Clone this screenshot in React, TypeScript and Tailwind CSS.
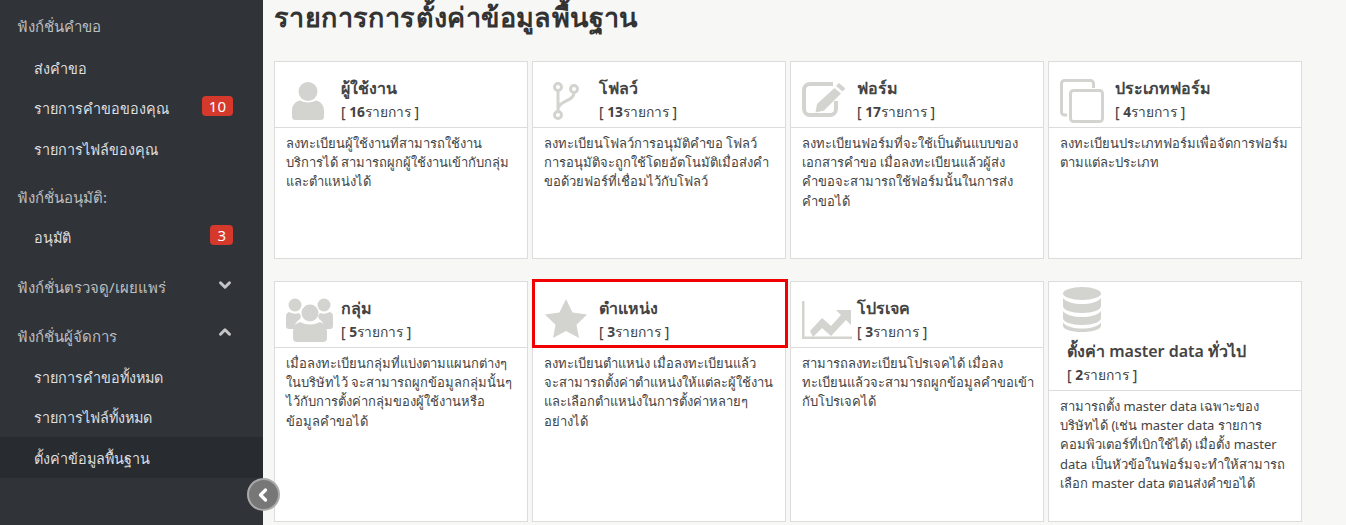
import { ReactNode } from 'react';
import { ChevronDown, ChevronLeft, ChevronUp } from 'lucide-react';

const UserIcon = () => (
  <svg viewBox="0 0 32 38" className="w-[32px] h-[38px] ml-[17px] mt-[20px] fill-[#d3d4d0]">
    <circle cx="16" cy="9.5" r="9.5" />
    <path d="M8 18.5q8 4 16 0c5 1 8 5 8 10v6a3.500 3.500 0 0 1-3.500 3.500h-25a3.500 3.500 0 0 1-3.500-3.500v-6c0-5 3-9 8-10z" />
  </svg>
);

const BranchIcon = () => (
  <svg viewBox="0 0 26 38" className="w-[26px] h-[38px] ml-[20px] mt-[20px] fill-none stroke-[#d3d4d0] stroke-[3px]">
    <circle cx="5" cy="5" r="3.500" />
    <circle cx="5" cy="33" r="3.500" />
    <circle cx="21" cy="7" r="3.500" />
    <path d="M5 9v20M21 11c0 9-16 7-16 17" />
  </svg>
);

const EditIcon = () => (
  <svg viewBox="0 0 44 35" className="w-[44px] h-[35px] ml-[11px] mt-[20px]">
    <path d="M31 2H8a6 6 0 0 0-6 6v19a6 6 0 0 0 6 6h20a6 6 0 0 0 6-6v-8" fill="none" stroke="#d3d4d0" strokeWidth="4" />
    <path d="M37 1l6.500 5.500-3 3-6.500-5.500zM32.500 6l6.500 5.500-17 17-8.500 2 1.500-8.500z" fill="#d3d4d0" />
  </svg>
);

const CopyIcon = () => (
  <svg viewBox="0 0 44 44" className="w-[44px] h-[44px] ml-[11px] mt-[17px] fill-none stroke-[#d3d4d0] stroke-[3px]">
    <path d="M7 36H4.500a3 3 0 0 1-3-3V4.500a3 3 0 0 1 3-3h26a3 3 0 0 1 3 3V9" />
    <rect x="10.500" y="11.500" width="32" height="31" rx="3" />
  </svg>
);

const GroupIcon = () => (
  <svg viewBox="0 0 47 44" className="w-[47px] h-[44px] ml-[11px] mt-[16px] fill-[#d3d4d0]">
    <circle cx="9" cy="7" r="6.500" />
    <circle cx="38" cy="7" r="6.500" />
    <path d="M3 14q6 3 10 1 3 3 1 6-5 3-6 10H3a3 3 0 0 1-3-3V18q0-3 3-4zM44 14q-6 3-10 1-3 3-1 6 5 3 6 10h5a3 3 0 0 0 3-3V18q0-3-3-4z" />
    <circle cx="24" cy="15" r="8.500" />
    <path d="M14 24q10 5 20 0 7 2 7 10v6a4 4 0 0 1-4 4H11a4 4 0 0 1-4-4v-6q0-8 7-10z" />
  </svg>
);

const StarIcon = () => (
  <svg viewBox="0 0 42 39" className="w-[42px] h-[39px] ml-[12px] mt-[17px] fill-[#d3d4d0]">
    <path d="M21 0l6.500 13.500 14.500 2-10.500 10.300L34 39 21 32l-13 7 2.500-13.200L0 15.500l14.500-2z" />
  </svg>
);

const ChartIcon = () => (
  <svg viewBox="0 0 50 38" className="w-[50px] h-[38px] ml-[11px] mt-[19px] fill-[#d3d4d0]">
    <path d="M0 0h2.500v35.500H50V38H0z" />
    <path d="M8 30l12-13 9 8 10-11-5-5h15v15l-5-5-15 16-9-8-9 9z" />
  </svg>
);

const DatabaseIcon = () => (
  <svg viewBox="0 0 38 45" className="w-[38px] h-[45px] fill-[#d3d4d0]">
    <ellipse cx="19" cy="6.500" rx="19" ry="6.500" />
    <path d="M0 11c3 4 11 6 19 6s16-2 19-6v8c0 4-8 7-19 7S0 23 0 19zM0 24c3 4 11 6 19 6s16-2 19-6v7c0 4-8 7-19 7S0 35 0 31zM0 35.500c3 4 11 6 19 6s16-2 19-6v3c0 4-8 6.500-19 6.500S0 42.500 0 38.500z" />
  </svg>
);

type Card = {
  title: string;
  count: string;
  icon: ReactNode;
  text: string;
  marked?: boolean;
};

const topCards: Card[] = [
  {
    title: 'ผู้ใช้งาน',
    count: '16',
    icon: <UserIcon />,
    text: 'ลงทะเบียนผู้ใช้งานที่สามารถใช้งาน\nบริการได้ สามารถผูกผู้ใช้งานเข้ากับกลุ่ม\nและตำแหน่งได้',
  },
  {
    title: 'โฟลว์',
    count: '13',
    icon: <BranchIcon />,
    text: 'ลงทะเบียนโฟลว์การอนุมัติคำขอ โฟลว์\nการอนุมัติจะถูกใช้โดยอัตโนมัติเมื่อส่งคำ\nขอด้วยฟอร์ที่เชื่อมไว้กับโฟลว์',
  },
  {
    title: 'ฟอร์ม',
    count: '17',
    icon: <EditIcon />,
    text: 'ลงทะเบียนฟอร์มที่จะใช้เป็นต้นแบบของ\nเอกสารคำขอ เมื่อลงทะเบียนแล้วผู้ส่ง\nคำขอจะสามารถใช้ฟอร์มนั้นในการส่ง\nคำขอได้',
  },
  {
    title: 'ประเภทฟอร์ม',
    count: '4',
    icon: <CopyIcon />,
    text: 'ลงทะเบียนประเภทฟอร์มเพื่อจัดการฟอร์ม\nตามแต่ละประเภท',
  },
];

const bottomCards: Card[] = [
  {
    title: 'กลุ่ม',
    count: '5',
    icon: <GroupIcon />,
    text: 'เมื่อลงทะเบียนกลุ่มที่แบ่งตามแผนกต่างๆ\nในบริษัทไว้ จะสามารถผูกข้อมูลกลุ่มนั้นๆ\nไว้กับการตั้งค่ากลุ่มของผู้ใช้งานหรือ\nข้อมูลคำขอได้',
  },
  {
    title: 'ตำแหน่ง',
    count: '3',
    icon: <StarIcon />,
    marked: true,
    text: 'ลงทะเบียนตำแหน่ง เมื่อลงทะเบียนแล้ว\nจะสามารถตั้งค่าตำแหน่งให้แต่ละผู้ใช้งาน\nและเลือกตำแหน่งในการตั้งค่าหลายๆ\nอย่างได้',
  },
  {
    title: 'โปรเจค',
    count: '3',
    icon: <ChartIcon />,
    text: 'สามารถลงทะเบียนโปรเจคได้ เมื่อลง\nทะเบียนแล้วจะสามารถผูกข้อมูลคำขอเข้า\nกับโปรเจคได้',
  },
];

function Count({ value }: { value: string }) {
  return (
    <p className="text-[13.8px] leading-[20px] mt-[1px] text-[#444] font-medium">
      [ <b className="font-bold">{value}</b>รายการ ]
    </p>
  );
}

function SettingCard({ card }: { card: Card }) {
  return (
    <div className="relative flex flex-col bg-white border border-[#dcdcdc]">
      <div className="flex h-[66px] border-b border-[#dcdcdc] shrink-0">
        <div className="w-[66px] shrink-0">{card.icon}</div>
        <div className="pt-[14px]">
          <h3 className="text-[16px] leading-[25px] font-semibold text-[#444]">{card.title}</h3>
          <Count value={card.count} />
        </div>
      </div>
      <p className="pl-[11px] pr-[4px] pt-[6px] text-[13px] leading-[19.2px] text-[#444] whitespace-pre-line">{card.text}</p>
      {card.marked && (
        <div className="absolute -top-[3px] -left-[1px] w-[256px] h-[69px] border-[3px] border-[#f00000]" />
      )}
    </div>
  );
}

function MenuLink({ label, badge, active }: { label: string; badge?: string; active?: boolean }) {
  return (
    <div className={`flex items-center justify-between h-[40.5px] pl-[34px] pr-[30px] ${active ? 'bg-[#282b2f]' : ''}`}>
      <span className="pt-[3px] text-[14.4px] font-medium text-[#dedfe0]">{label}</span>
      {badge && (
        <span className="bg-[#d4392b] text-white text-[15px] leading-[20px] px-[7px] rounded-[4px] -mt-[4px]">{badge}</span>
      )}
    </div>
  );
}

function MenuSection({ label, icon }: { label: string; icon?: ReactNode }) {
  return (
    <div className="flex items-center justify-between h-[40px] pl-[17px] pr-[30px] text-[15px] text-[#bcbec0]">
      <span>{label}</span>
      {icon}
    </div>
  );
}

export default function App() {
  return (
    <div className="flex h-[525px] w-[1346px] overflow-hidden bg-[#f7f7f5] font-['Noto_Sans','Liberation_Sans',sans-serif]">
      <aside className="relative z-10 w-[263px] shrink-0 bg-[#303438] pt-[6px]">
        <MenuSection label="ฟังก์ชั่นคำขอ" />
        <div className="h-[1px]" />
        <MenuLink label="ส่งคำขอ" />
        <MenuLink label="รายการคำขอของคุณ" badge="10" />
        <MenuLink label="รายการไฟล์ของคุณ" />
        <div className="h-[9px]" />
        <MenuSection label="ฟังก์ชั่นอนุมัติ:" />
        <div className="-mt-[1px]">
          <MenuLink label="อนุมัติ" badge="3" />
        </div>
        <div className="h-[10px]" />
        <MenuSection label="ฟังก์ชั่นตรวจดู/เผยแพร่" icon={<ChevronDown className="w-[18px] h-[18px] -mt-[5px] -mr-[1px] text-[#c4c6c8] stroke-[4px]" />} />
        <div className="h-[9px]" />
        <MenuSection label="ฟังก์ชั่นผู้จัดการ" icon={<ChevronUp className="w-[18px] h-[18px] -mt-[8px] -mr-[1px] text-[#c4c6c8] stroke-[4px]" />} />
        <MenuLink label="รายการคำขอทั้งหมด" />
        <MenuLink label="รายการไฟล์ทั้งหมด" />
        <MenuLink label="ตั้งค่าข้อมูลพื้นฐาน" active />
        <button className="absolute top-[478px] -right-[17px] w-[33px] h-[33px] rounded-full bg-[#777] border-2 border-[#aaa] flex items-center justify-center">
          <ChevronLeft className="w-[20px] h-[20px] text-white stroke-[4px] -ml-[2px]" />
        </button>
      </aside>

      <main className="flex-1 pl-[11px]">
        <h1 className="text-[27px] leading-[34px] font-bold text-[#333] tracking-[0.4px] mb-[27px]">รายการการตั้งค่าข้อมูลพื้นฐาน</h1>
        <div className="grid grid-cols-[repeat(4,254px)] grid-rows-[198px_241px] gap-x-[4px] gap-y-[22px]">
          {topCards.map((card) => (
            <SettingCard key={card.title} card={card} />
          ))}
          {bottomCards.map((card) => (
            <SettingCard key={card.title} card={card} />
          ))}
          <div className="flex flex-col bg-white border border-[#dcdcdc]">
            <div className="h-[109px] border-b border-[#dcdcdc] shrink-0 pl-[14px] pt-[5px]">
              <DatabaseIcon />
              <div className="pl-[4px] pt-[7px]">
                <h3 className="text-[16px] leading-[25px] font-semibold text-[#444]">ตั้งค่า master data ทั่วไป</h3>
                <Count value="2" />
              </div>
            </div>
            <p className="pl-[11px] pr-[4px] pt-[6px] text-[13px] leading-[19.2px] text-[#444] whitespace-pre-line">
              {'สามารถตั้ง master data เฉพาะของ\nบริษัทได้ (เช่น master data รายการ\nคอมพิวเตอร์ที่เบิกใช้ได้) เมื่อตั้ง master\ndata เป็นหัวข้อในฟอร์มจะทำให้สามารถ\nเลือก master data ตอนส่งคำขอได้'}
            </p>
          </div>
        </div>
      </main>
    </div>
  );
}
